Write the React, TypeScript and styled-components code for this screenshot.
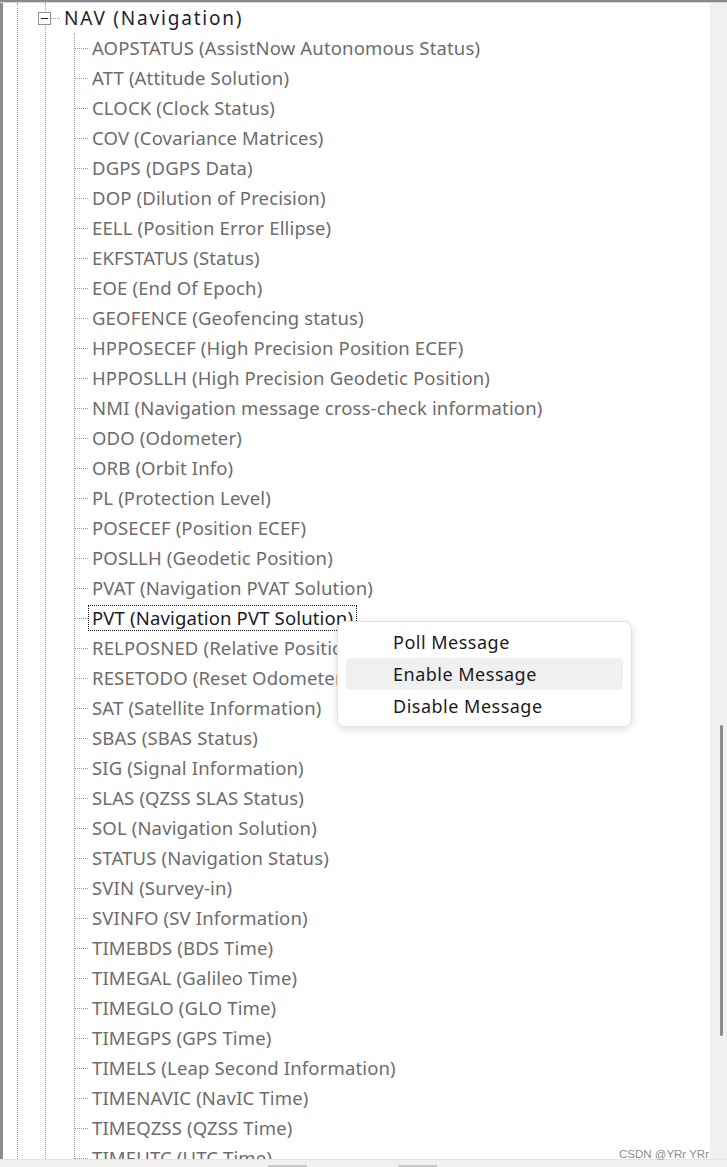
import React from 'react';
import styled, { createGlobalStyle } from 'styled-components';

const navItems = [
    'AOPSTATUS (AssistNow Autonomous Status)',
    'ATT (Attitude Solution)',
    'CLOCK (Clock Status)',
    'COV (Covariance Matrices)',
    'DGPS (DGPS Data)',
    'DOP (Dilution of Precision)',
    'EELL (Position Error Ellipse)',
    'EKFSTATUS (Status)',
    'EOE (End Of Epoch)',
    'GEOFENCE (Geofencing status)',
    'HPPOSECEF (High Precision Position ECEF)',
    'HPPOSLLH (High Precision Geodetic Position)',
    'NMI (Navigation message cross-check information)',
    'ODO (Odometer)',
    'ORB (Orbit Info)',
    'PL (Protection Level)',
    'POSECEF (Position ECEF)',
    'POSLLH (Geodetic Position)',
    'PVAT (Navigation PVAT Solution)',
    'PVT (Navigation PVT Solution)',
    'RELPOSNED (Relative Positioning Information in NED frame)',
    'RESETODO (Reset Odometer)',
    'SAT (Satellite Information)',
    'SBAS (SBAS Status)',
    'SIG (Signal Information)',
    'SLAS (QZSS SLAS Status)',
    'SOL (Navigation Solution)',
    'STATUS (Navigation Status)',
    'SVIN (Survey-in)',
    'SVINFO (SV Information)',
    'TIMEBDS (BDS Time)',
    'TIMEGAL (Galileo Time)',
    'TIMEGLO (GLO Time)',
    'TIMEGPS (GPS Time)',
    'TIMELS (Leap Second Information)',
    'TIMENAVIC (NavIC Time)',
    'TIMEQZSS (QZSS Time)',
    'TIMEUTC (UTC Time)',
];

const menuItems = ['Poll Message', 'Enable Message', 'Disable Message'];

const App = () => {
    return (
        <>
            <GlobalStyle />
            <Window>
                <Body>
                    <TreePane>
                        <Branch>
                            <SubBranch>
                                <ParentRow>
                                    <Expander />
                                    <ParentConnector />
                                    <ParentLabel>NAV (Navigation)</ParentLabel>
                                </ParentRow>
                                <Children>
                                    {navItems.map((item) => {
                                        const selected = item.startsWith('PVT ');
                                        return (
                                            <ItemRow key={item}>
                                                <Connector />
                                                <ItemLabel selected={selected}>{item}</ItemLabel>
                                            </ItemRow>
                                        );
                                    })}
                                </Children>
                            </SubBranch>
                        </Branch>

                        {/* right-click menu on the PVT node */}
                        <ContextMenu>
                            {menuItems.map((m) => (
                                <MenuItem key={m} hover={m === 'Enable Message'}>{m}</MenuItem>
                            ))}
                        </ContextMenu>
                    </TreePane>
                    <VScroll>
                        <VThumb />
                    </VScroll>
                </Body>
                <HScroll>
                    <HTick />
                    <HTick />
                </HScroll>
                <Watermark>CSDN @YRr YRr</Watermark>
            </Window>
        </>
    );
};

export default App;

const GlobalStyle = createGlobalStyle`
    html, body {
        margin: 0;
        padding: 0;
        background: #fff;
    }
    body {
        font-family: "Noto Sans", "Open Sans", sans-serif;
    }
`

const Window = styled.div`
    position: relative;
    width: 727px;
    height: 1167px;
    overflow: hidden;
    display: flex;
    flex-direction: column;
    background: #fff;
    border-top: 2px solid #8a8a8a;
    box-sizing: border-box;
`

const Body = styled.div`
    display: flex;
    flex: 1;
    min-height: 0;
    border-top: 1px solid #d6d6d6;
`

const TreePane = styled.div`
    position: relative;
    flex: 1;
    overflow: hidden;
    border-left: 3px solid #8c8c8c;
    padding-left: 14px;
`

const Branch = styled.div`
    border-left: 1px dotted #9a9a9a;
    padding-left: 27px;
    min-height: 100%;
    box-sizing: border-box;
`

const SubBranch = styled.div`
    border-left: 1px dotted #9a9a9a;
`

const ParentRow = styled.div`
    display: flex;
    align-items: center;
    height: 30px;
    margin-left: -8px;
`

const Expander = styled.span`
    position: relative;
    width: 11px;
    height: 11px;
    border: 1px solid #8f8f8f;
    background: #fff;
    flex-shrink: 0;
    &::after{
        content: '';
        position: absolute;
        left: 2px;
        top: 5px;
        width: 7px;
        height: 1px;
        background: #222;
    }
`

const ParentConnector = styled.span`
    width: 9px;
    border-top: 1px dotted #9a9a9a;
    margin-right: 4px;
`

const ParentLabel = styled.span`
    font-size: 19px;
    letter-spacing: 1.8px;
    color: #1e1e32;
    white-space: nowrap;
`

const Children = styled.div`
    margin-left: 28px;
    border-left: 1px dotted #9a9a9a;
`

const ItemRow = styled.div`
    display: flex;
    align-items: center;
    height: 30px;
`

const Connector = styled.span`
    width: 13px;
    border-top: 1px dotted #9a9a9a;
    flex-shrink: 0;
`

const ItemLabel = styled.span<{ selected?: boolean }>`
    font-size: 18.5px;
    letter-spacing: 0.15px;
    line-height: 24px;
    white-space: nowrap;
    padding: 0 3px;
    border: 1px dotted ${(p) => (p.selected ? '#111' : 'transparent')};
    color: ${(p) => (p.selected ? '#1a1a2c' : '#6c6c6c')};
`

const ContextMenu = styled.div`
    position: absolute;
    left: 334px;
    top: 618px;
    width: 295px;
    padding: 4px 8px;
    background: #fff;
    border: 1px solid #e2e2e2;
    border-radius: 8px;
    box-shadow: 0 2px 8px rgba(0, 0, 0, 0.14);
    box-sizing: border-box;
`

const MenuItem = styled.div<{ hover?: boolean }>`
    height: 32px;
    line-height: 32px;
    padding-left: 47px;
    font-size: 18px;
    letter-spacing: 0.5px;
    color: #1a1a1a;
    border-radius: 4px;
    background: ${(p) => (p.hover ? '#f0f0f0' : 'transparent')};
`

const VScroll = styled.div`
    width: 17px;
    background: #f0f0f0;
    position: relative;
`

const VThumb = styled.div`
    position: absolute;
    left: 10px;
    top: 722px;
    width: 3px;
    height: 311px;
    border-radius: 2px;
    background: #8a8a8a;
`

const HScroll = styled.div`
    height: 7px;
    background: #f0f0f0;
    border-top: 1px solid #e4e4e4;
    position: relative;
    display: flex;
    align-items: flex-end;
    gap: 91px;
    padding-left: 268px;
`

const HTick = styled.span`
    width: 39px;
    height: 2px;
    background: #c8c8c8;
`

const Watermark = styled.div`
    position: absolute;
    right: 18px;
    bottom: 7px;
    font-family: "Liberation Sans", Arial, sans-serif;
    font-size: 11.5px;
    color: #8c8c8c;
`
